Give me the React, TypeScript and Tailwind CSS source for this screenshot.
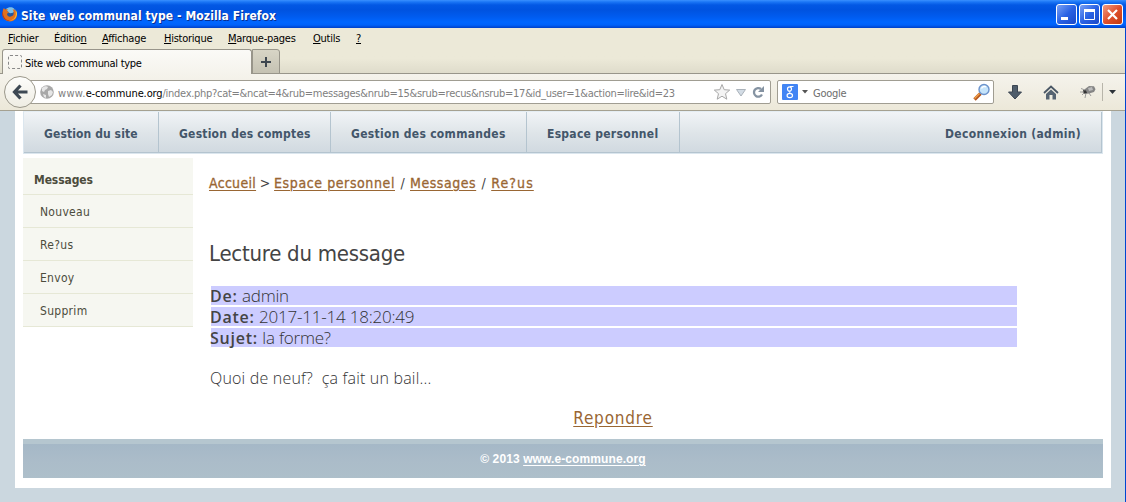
import type { ReactNode } from "react";

const menuItems: { w: string; pre: string; key: string; post: string }[] = [
  { w: "w-[46px]", pre: "", key: "F", post: "ichier" },
  { w: "w-[48px]", pre: "Éditio", key: "n", post: "" },
  { w: "w-[62px]", pre: "", key: "A", post: "ffichage" },
  { w: "w-[64px]", pre: "", key: "H", post: "istorique" },
  { w: "w-[85px]", pre: "", key: "M", post: "arque-pages" },
  { w: "w-[43px]", pre: "", key: "O", post: "utils" },
  { w: "w-[20px]", pre: "", key: "?", post: "" },
];

function FirefoxLogo() {
  return (
    <svg width="16" height="16" viewBox="0 0 16 16">
      <circle cx="8.3" cy="7.6" r="6.2" fill="#2458a0" />
      <path d="M4 3c2-2 6-2.500 8-.5 1.500 2 0 4-2 4.500S6 7 4 3z" fill="#7cc0ea" />
      <path d="M1 4c0-1 1-2 1-2l1 1.500C4 3 5 3 6 3.500c-1 .5-1 1.500-.5 2L7 6c0 1-2 1-2 2 0 2 2 3 4 2.500 1.500-.5 2-1 2.500-2 .5-2 0-4-1-5.500 3 1 4.500 3 4.500 5.500 0 4-3 7-7 7s-7.500-3-7.500-7c0-1.500.3-3 .5-4.500z" fill="#e2701c" />
      <path d="M13 3c2 2 2.500 5 1.500 7-1 3-4 4.800-7 4.500 4-.5 6-3 6.300-6 .2-2-.1-4-.8-5.500z" fill="#f7c63c" />
      <path d="M1 5c-.5 5 2 9 7 9.800C4 15.500.5 12 .3 8.500.2 7 .5 6 1 5z" fill="#b3361b" />
    </svg>
  );
}

function WindowButton({ red, children }: { red?: boolean; children: ReactNode }) {
  return (
    <div
      className={
        red
          ? "h-[21px] w-[21px] rounded-[3px] border border-white bg-linear-to-br from-[#f09a80] via-[#e0502c] to-[#c03a10]"
          : "h-[21px] w-[21px] rounded-[3px] border border-white bg-linear-to-br from-[#7aa0f4] via-[#2a62e4] to-[#1a48c8]"
      }
    >
      <svg width="19" height="19" viewBox="0 0 19 19" fill="none">
        {children}
      </svg>
    </div>
  );
}

function TitleBar() {
  return (
    <header className="flex h-7 items-center bg-[linear-gradient(#3a90ff_0px,#1a75f5_2px,#0358e4_5px,#0053e0_10px,#005cf0_17px,#0066ff_22px,#0062fa_25px,#0040c8_28px)] pl-[2px] pr-[3px]">
      <FirefoxLogo />
      <h1 className="ml-[3px] mt-[3px] flex-1 whitespace-nowrap text-[12px] font-bold leading-4 tracking-[0.09px] text-white [text-shadow:1px_1px_0_#0a2f90]">
        Site web communal type - Mozilla Firefox
      </h1>
      <div className="mt-[1px] flex gap-[2px]">
        <WindowButton>
          <path d="M4 13.500h7" stroke="#fff" strokeWidth="3" />
        </WindowButton>
        <WindowButton>
          <path d="M4.500 5.500h10v9h-10z" stroke="#fff" />
          <path d="M4 5.500h11" stroke="#fff" strokeWidth="3" />
        </WindowButton>
        <WindowButton red>
          <path d="M5 5l9 9M14 5l-9 9" stroke="#fff" strokeWidth="2.200" />
        </WindowButton>
      </div>
    </header>
  );
}

function AddressBar() {
  return (
    <div className="flex h-[37px] items-center border-b border-[#a5a191] bg-linear-to-b from-[#f5f3ec] to-[#ece8d9] pl-[4px]">
      <div className="z-10 flex h-8 w-8 shrink-0 items-center justify-center rounded-full border border-[#9b988b] bg-linear-to-b from-[#fdfdfb] to-[#efede3]">
        <svg width="18" height="18" viewBox="0 0 18 18" fill="none" stroke="#3d4853" strokeWidth="3.200">
          <path d="M9.500 2.500L3.500 9l6 6.500M4 9h12.500" />
        </svg>
      </div>
      <div className="-ml-[8px] flex h-6 w-[743px] shrink-0 items-center rounded-r-[2px] border border-[#a09d92] bg-white pl-[11px] pr-[5px]">
        <svg width="14" height="14" viewBox="0 0 14 14">
          <circle cx="7" cy="7" r="6.800" fill="#a8a8a8" />
          <path d="M2 3c2-2 5-2 6-1L7 4 5 5 4 7 2 6zM8 6l3-1 2 2-1 3-3 2-1-3zM3 9l3 1v3l-2-1z" fill="#e6e6e6" />
        </svg>
        <p className="ml-[4px] mt-[3px] flex-1 whitespace-nowrap text-[11px] leading-4 tracking-[-0.28px] text-[#808080]">
          <span className="tracking-[0.3px]">www.</span>
          <span className="tracking-[-0.12px] text-black">e-commune.org</span>
          /index.php?cat=&amp;ncat=4&amp;rub=messages&amp;nrub=15&amp;srub=recus&amp;nsrub=17&amp;id_user=1&amp;action=lire&amp;id=23
        </p>
        <svg width="52" height="18" viewBox="0 0 52 18" fill="none">
          <path d="M9 1.500l2.200 5.200 5.500.4-4.200 3.600 1.300 5.500L9 13.200l-4.800 3 1.300-5.500L1.300 7.100l5.500-.4z" fill="#f4f4f4" stroke="#a8a8a8" />
          <path d="M23.500 6.500h9L28 13z" fill="#d3dce5" stroke="#aab2ba" />
          <path d="M49 11.500a4.300 4.300 0 1 1-1-5.500" stroke="#8593a2" strokeWidth="2.300" />
          <path d="M51 3v6h-6z" fill="#8593a2" />
        </svg>
      </div>
      <div className="ml-[6px] flex h-6 w-[217px] shrink-0 items-center rounded-[2px] border border-[#a09d92] bg-white pl-[4px] pr-[2px]">
        <svg width="16" height="16" viewBox="0 0 16 16" fill="none" stroke="#fff">
          <rect width="16" height="16" rx="1" fill="#4285f4" stroke="none" />
          <ellipse cx="7.500" cy="5" rx="2" ry="2.200" strokeWidth="1.200" />
          <path d="M8 2.500h3.500M8 7.300c-1 .5-.5 1.300.5 1.900" strokeWidth="1" />
          <ellipse cx="7.800" cy="11.500" rx="2.700" ry="2.100" strokeWidth="1.200" />
        </svg>
        <svg width="6" height="4" viewBox="0 0 6 4" className="ml-[4px]">
          <path d="M0 0h6L3 3.500z" fill="#555" />
        </svg>
        <span className="ml-[5px] mt-[3px] flex-1 text-[11px] leading-4 tracking-[-0.25px] text-[#6d6d6d]">Google</span>
        <svg width="18" height="18" viewBox="0 0 18 18" fill="none">
          <path d="M1.500 16.500l6-6" stroke="#b5561e" strokeWidth="3.400" />
          <path d="M1.500 15.500l5-5" stroke="#f0a04a" strokeWidth="1.500" />
          <circle cx="11" cy="6.500" r="5" fill="#c5e4fb" stroke="#6c93cc" strokeWidth="1.400" />
          <path d="M8.500 5.500c1-2 3-2.500 4.500-1.500" stroke="#fff" strokeWidth="1.500" />
        </svg>
      </div>
      <svg width="14" height="15" viewBox="0 0 14 15" className="ml-[14px] shrink-0">
        <path d="M4.500.5h5v6.500H13.500L7 14 .5 7h4z" fill="#4f5d6b" stroke="#3c4652" />
      </svg>
      <svg width="16" height="15" viewBox="0 0 16 15" className="ml-[21px] shrink-0" fill="none">
        <path d="M1 8l7-6.500L15 8" stroke="#4a5765" strokeWidth="1.800" />
        <path d="M3 9l5-4.600L13 9v5.500H9.500V10h-3v4.500H3z" fill="#566472" />
      </svg>
      <svg width="16" height="14" viewBox="0 0 16 14" className="ml-[21px] shrink-0" fill="none">
        <path d="M5 4l4-3 5 .3 1.500 3L14 7l-5 1.500-4 .5L2.500 7z" fill="#858585" />
        <path d="M3 5l3 .5L7 8 4 8.500z" fill="#333" />
        <path d="M8 3l4-1 1 3-4 1z" fill="#bbb" />
        <path d="M5 5L1 3.500M4 7H0M6 8l-1 5M9 8l2 3M4 8l-2 2" stroke="#888" strokeWidth=".8" />
      </svg>
      <div className="ml-[6px] h-[18px] w-px shrink-0 bg-[#b8b5aa]" />
      <svg width="8" height="4" viewBox="0 0 8 4" className="ml-[6px] shrink-0">
        <path d="M0 0h7L3.500 4z" fill="#2c3238" />
      </svg>
    </div>
  );
}

const nav = [
  { w: "w-[135px] tracking-[0.1px]", label: "Gestion du site" },
  { w: "w-[172px]", label: "Gestion des comptes" },
  { w: "w-[196px] tracking-[0.3px]", label: "Gestion des commandes" },
  { w: "w-[153px] tracking-[0.28px]", label: "Espace personnel" },
];

const fields = [
  { label: "De:", value: "admin" },
  { label: "Date:", value: "2017-11-14 18:20:49" },
  { label: "Sujet:", value: "la forme?" },
];

function Crumb({ className, children }: { className: string; children: ReactNode }) {
  return (
    <a
      className={`${className} shrink-0 text-[#996633] underline decoration-1 underline-offset-2 [-webkit-text-stroke:0.3px_#996633]`}
    >
      {children}
    </a>
  );
}

export default function App() {
  return (
    <div className="flex h-[502px] w-[1126px] flex-col overflow-hidden bg-[#ece9d8] font-['DejaVu_Sans_Condensed','DejaVu_Sans',sans-serif]">
      <TitleBar />
      <div className="flex min-h-0 flex-1 flex-col border-r border-[#0046d0]">
        <nav className="flex h-[21px] shrink-0 pl-[8px] pt-[3px] text-[11px] leading-4 tracking-[-0.25px] text-black">
          {menuItems.map((m) => (
            <span key={m.key} className={m.w}>
              {m.pre}
              <u className="underline-offset-1">{m.key}</u>
              {m.post}
            </span>
          ))}
        </nav>
        <div className="flex h-[25px] shrink-0 items-end border-b border-[#98958a] bg-linear-to-b from-[#ece9d8] from-40% to-[#dfdccb] pl-[2px]">
          <div className="-mb-px flex h-[25px] w-[250px] items-center rounded-t-[3px] border border-b-0 border-[#98958a] bg-linear-to-b from-[#fbfaf7] to-[#f5f3ec] pl-[5px]">
            <div className="h-[14px] w-[14px] rounded-[2px] border border-dashed border-[#888]" />
            <span className="ml-[3px] mt-[4px] text-[11px] leading-4 tracking-[-0.3px] text-black">Site web communal type</span>
          </div>
          <div className="-mb-px flex h-[25px] w-[28px] items-center justify-center rounded-tr-[3px] border border-[#98958a] bg-linear-to-b from-[#d8d5c6] to-[#c5c2b3]">
            <svg width="10" height="10" viewBox="0 0 10 10" stroke="#3e4750" strokeWidth="2">
              <path d="M5 0v10M0 5h10" />
            </svg>
          </div>
        </div>
        <AddressBar />

        <div className="flex-1 bg-[#cbd7df] pl-[15px] pr-[14px]">
          <div className="flex h-[377px] flex-col bg-white px-[8px]">
            <div className="flex h-[43px] shrink-0 border-x border-b border-[#dbe6ee] border-t border-t-[#e4edf3] bg-linear-to-b from-[#f1f4f7] via-[#dfe5e9] to-[#d0d9e0] text-[12px] font-bold leading-4 tracking-[0.23px] text-[#43566a]">
              <div className="flex flex-1 border-b border-r border-[#b4c4cf]">
                {nav.map((n) => (
                  <a key={n.label} className={`${n.w} shrink-0 whitespace-nowrap border-r border-[#b4c4cf] pl-[20px] pt-[14px]`}>
                    {n.label}
                  </a>
                ))}
                <a className="ml-auto whitespace-nowrap pr-[20px] pt-[14px] tracking-[0.32px]">Deconnexion (admin)</a>
              </div>
            </div>

            <div className="flex h-[285px] shrink-0 pt-[4px]">
              <aside className="w-[170px] shrink-0 text-[12px] text-[#4c4c3c]">
                <div className="flex h-[37px] items-end border-b border-[#e6e8d6] bg-[#f6f7f1] pb-[6px] pl-[11px] font-bold leading-4 tracking-[-0.1px]">
                  Messages
                </div>
                {["Nouveau", "Re?us", "Envoy", "Supprim"].map((s) => (
                  <div key={s} className="flex h-[33px] items-center border-b border-[#e6e8d6] bg-[#f6f7f1] pl-[17px] pt-px leading-4 tracking-[0.3px]">
                    {s}
                  </div>
                ))}
              </aside>
              <main className="flex-1 pl-[16px] text-[#444]">
                <div className="flex whitespace-nowrap pt-[17px] text-center text-[14px] leading-4">
                  <Crumb className="tracking-[0.3px]">Accueil</Crumb>
                  <span className="w-[18px]">&gt;</span>
                  <Crumb className="tracking-[0.6px]">Espace personnel</Crumb>
                  <span className="w-[15px]">/</span>
                  <Crumb className="tracking-[0.55px]">Messages</Crumb>
                  <span className="w-[15px]">/</span>
                  <Crumb className="tracking-[1.1px]">Re?us</Crumb>
                </div>
                <h2 className="mt-[49px] text-[22px] leading-7 tracking-[-0.25px]">Lecture du message</h2>
                <div className="ml-[2px] mt-[18px] flex w-[806px] flex-col gap-[2px] font-['Open_Sans','Noto_Sans',sans-serif] text-[17px]">
                  {fields.map((f) => (
                    <div key={f.label} className="h-[19px] bg-[#ccccff] leading-[20px]">
                      <b className="-ml-px text-[16px] font-semibold tracking-[0.75px]">{f.label}</b>{" "}
                      <span className="font-light tracking-[-0.22px] text-[#333]">{f.value}</span>
                    </div>
                  ))}
                </div>
                <p className="ml-px mt-[21px] whitespace-pre font-['Open_Sans','Noto_Sans',sans-serif] text-[16px] font-light leading-5 tracking-[0.19px] text-[#333]">Quoi de neuf?  ça fait un bail...</p>
                <div className="mt-[20px] w-[808px] text-center text-[17px] leading-5">
                  <a className="tracking-[0.8px] text-[#996633] underline underline-offset-2">Repondre</a>
                </div>
              </main>
            </div>

            <footer className="h-[39px] shrink-0 border-t-[5px] border-[#b5c6cf] bg-linear-to-b from-[#a5b8c7] via-[#abbcc9] to-[#adbfca] pt-[7px] text-center font-['Liberation_Sans',Arial,sans-serif] text-[12px] font-bold leading-4 tracking-[0.1px] text-white">
              © 2013 <a className="underline underline-offset-2">www.e-commune.org</a>
            </footer>
          </div>
        </div>
      </div>
    </div>
  );
}
